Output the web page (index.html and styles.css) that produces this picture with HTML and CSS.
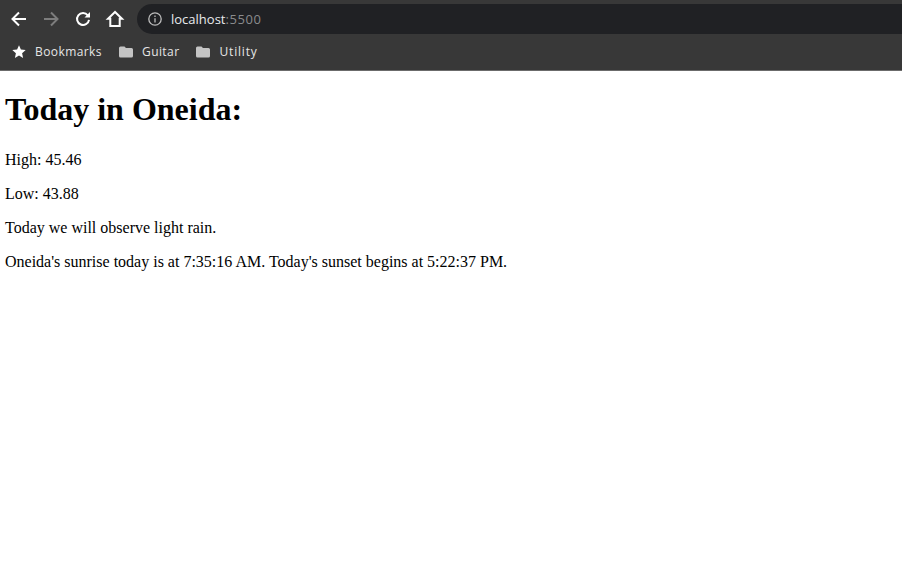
FILE: index.html
```html
<!DOCTYPE html>
<html lang="en">
<head>
<meta charset="utf-8">
<title>Today in Oneida</title>
<link rel="stylesheet" href="styles.css">
</head>
<body>
<header class="chrome">
  <div class="toolbar">
    <svg class="nav" viewBox="0 0 24 24"><path class="st" d="M19 12H6M12 5.500L5.500 12l6.500 6.500"/></svg>
    <svg class="nav" viewBox="0 0 24 24"><path class="st dim" d="M5 12H18M12 5.500l6.500 6.500-6.500 6.500"/></svg>
    <svg class="nav" viewBox="0 0 24 24"><path class="st" d="M16.800 8.300A6 6 0 1 0 18 12.800"/><path class="fl" d="M19 5V10.500H13.500Z"/></svg>
    <svg class="nav" viewBox="0 0 24 24"><path class="st" d="M12 5L5 11.800H7.300V19H16.700V11.800H19Z"/></svg>
    <div class="omnibox">
      <svg class="info" viewBox="0 0 16 16"><circle class="thin" cx="8" cy="8" r="6.200"/><path class="thin" d="M8 7.200V11.500M8 4.500V6"/></svg>
      <span class="host">localhost</span><span class="port">:5500</span>
    </div>
  </div>
  <nav class="bookmarks">
    <span class="mark"><svg class="ic" viewBox="0 0 16 16"><path class="star" d="M8 1.200l1.900 4.300 4.800.5-3.600 3.200 1 4.800L8 11.500l-4.100 2.500 1-4.800L1.300 6l4.800-.5z"/></svg>Bookmarks</span>
    <span class="mark"><svg class="ic" viewBox="0 0 16 16"><path class="folder" d="M2.500 2.500H6.500L8 4H13.500A1.500 1.500 0 0 1 15 5.500V12A1.500 1.500 0 0 1 13.500 13.500H2.500A1.500 1.500 0 0 1 1 12V4A1.500 1.500 0 0 1 2.500 2.500Z"/></svg>Guitar</span>
    <span class="mark wide"><svg class="ic" viewBox="0 0 16 16"><path class="folder" d="M2.500 2.500H6.500L8 4H13.500A1.500 1.500 0 0 1 15 5.500V12A1.500 1.500 0 0 1 13.500 13.500H2.500A1.500 1.500 0 0 1 1 12V4A1.500 1.500 0 0 1 2.500 2.500Z"/></svg>Utility</span>
  </nav>
</header>
<main class="page">
  <h1>Today in Oneida:</h1>
  <p>High: 45.46</p>
  <p>Low: 43.88</p>
  <p>Today we will observe light rain.</p>
  <p>Oneida's sunrise today is at 7:35:16 AM. Today's sunset begins at 5:22:37 PM.</p>
</main>
</body>
</html>
```
FILE: styles.css
```css
html, body { margin: 0; background: #fff; }
body { overflow: hidden; height: 566px; }
.chrome {
  background: #383838;
  border-bottom: 1px solid #6b6b6b;
  height: 70px;
  font-family: "Open Sans", sans-serif;
  overflow: hidden;
}
.toolbar {
  display: flex;
  align-items: center;
  height: 38px;
  padding: 0 0 0 3px;
}
.nav { width: 32px; height: 32px; flex: none; padding: 4px; box-sizing: border-box; }
.st { fill: none; stroke: #fff; stroke-width: 2; }
.st.dim { stroke: #7d7d7d; }
.fl { fill: #fff; }
.omnibox {
  flex: 1;
  margin-left: 6px;
  height: 30px;
  background: #202124;
  border-radius: 15px 0 0 15px;
  display: flex;
  align-items: center;
  padding-left: 10px;
  font-size: 13px;
}
.info { width: 16px; height: 16px; margin-right: 8px; }
.thin { fill: none; stroke: #bdbdbd; stroke-width: 1.300; }
.host { color: #e8eaed; }
.port { color: #8a8b8d; letter-spacing: 0.600px; }
.bookmarks {
  display: flex;
  align-items: center;
  gap: 16px;
  height: 27px;
  padding-left: 11px;
  color: #e6e6e6;
  font-size: 12px;
  letter-spacing: 0.420px;
}
.mark { display: flex; align-items: center; gap: 8px; }
.mark.wide { letter-spacing: 0.820px; }
.ic { width: 16px; height: 16px; }
.star { fill: #fff; }
.folder { fill: #c4c4c4; }
.page {
  padding: 0 5px;
  font-family: "Liberation Serif", serif;
  color: #000;
}
h1 { font-size: 32px; margin: 20.400px 0 22.480px; }
p { font-size: 16px; margin: 16px 0; }
```
